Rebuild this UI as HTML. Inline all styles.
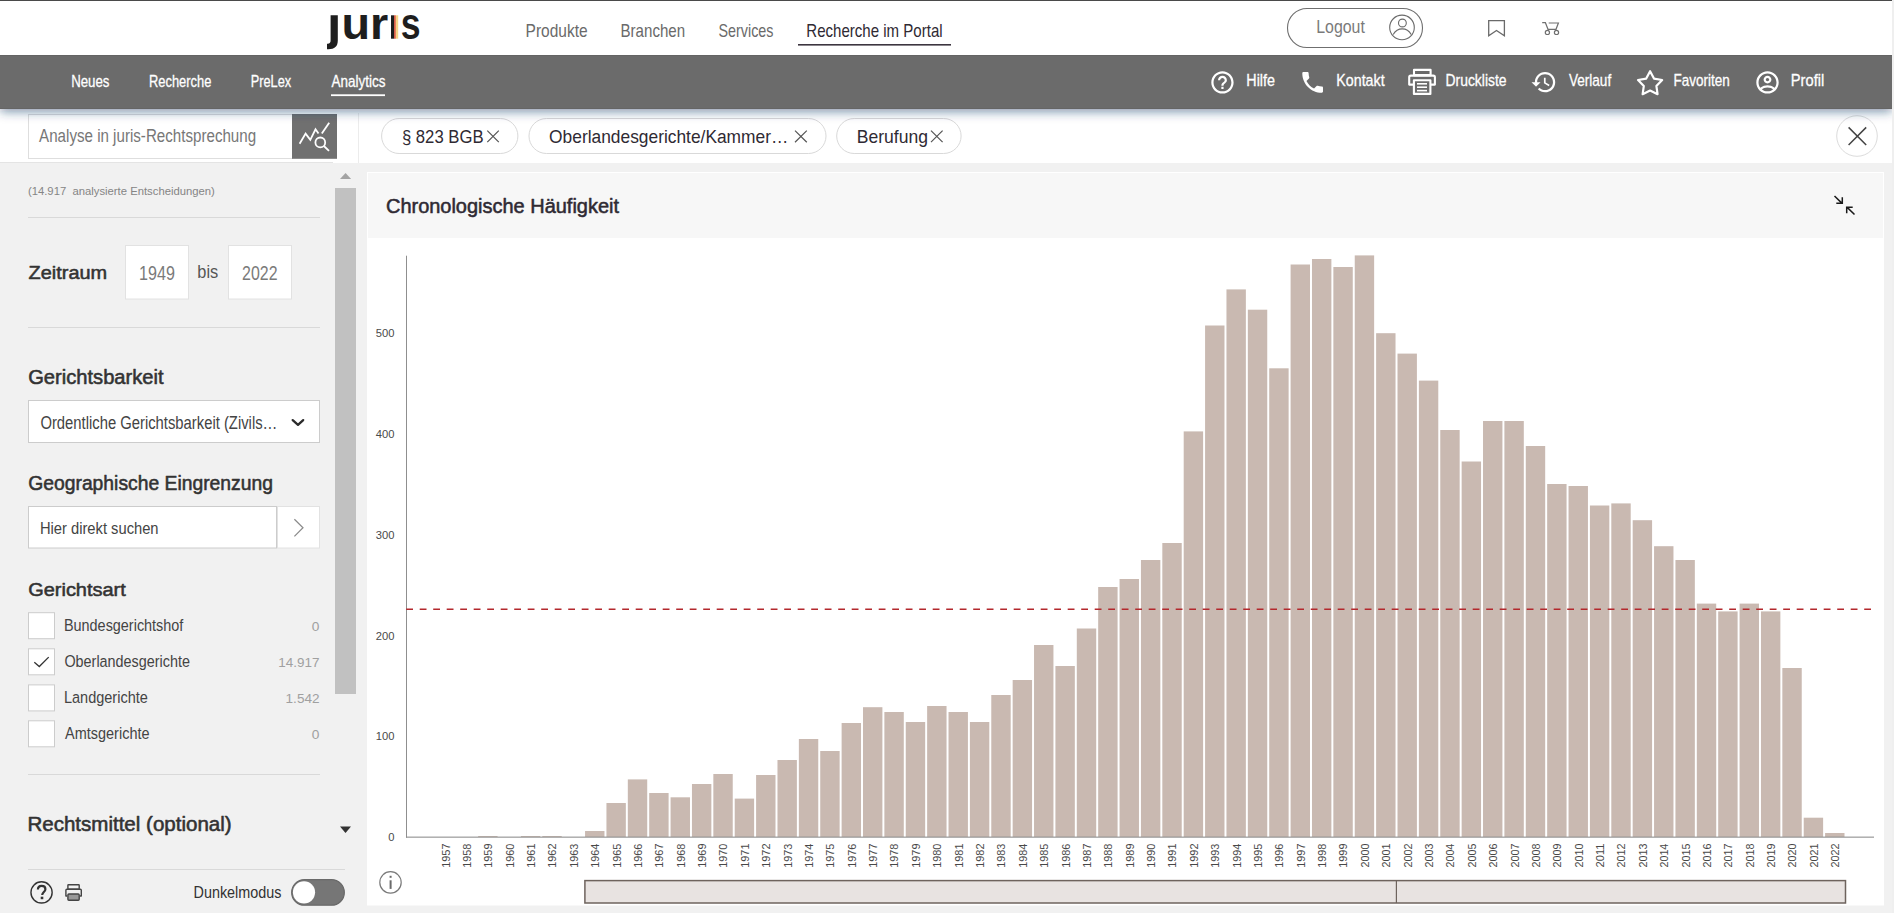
<!DOCTYPE html>
<html><head><meta charset="utf-8"><title>juris Analytics</title>
<style>
html,body{margin:0;padding:0;}
body{width:1894px;height:913px;overflow:hidden;background:#f1f1f1;font-family:"Liberation Sans", sans-serif;}
svg{position:absolute;left:0;top:0;display:block;}
text{font-family:"Liberation Sans", sans-serif;white-space:pre;}
</style></head><body>
<svg width="1894" height="913" viewBox="0 0 1894 913">
<defs>
<linearGradient id="sh" x1="0" y1="0" x2="0" y2="1">
<stop offset="0" stop-color="#a9b5c2"/><stop offset="0.25" stop-color="#c3cbd5"/><stop offset="0.55" stop-color="#e6e9ee"/><stop offset="1" stop-color="#ffffff"/>
</linearGradient>
<filter id="blur" x="-0.05" y="-0.5" width="1.1" height="2"><feGaussianBlur stdDeviation="5.5"/></filter>
<clipPath id="below"><rect x="0" y="108" width="1892" height="40"/></clipPath>
</defs>
<rect x="0" y="0" width="1894" height="913" fill="#f1f1f1"/>
<rect x="0" y="0" width="1892" height="163" fill="#ffffff"/>
<rect x="0" y="0" width="1892" height="1" fill="#4a4a4a"/>
<rect x="1892" y="0" width="2" height="913" fill="#efefef"/>
<rect x="358" y="113" width="1" height="50" fill="#ececec"/>
<rect x="0" y="162" width="333" height="1" fill="#e4e4e4"/>
<g fill="#1e1e1e">
<path d="M330.6,15.3 H337.8 V40.5 C337.8,46.5 334.5,49.2 328.5,49.2 H327 V43.8 C330,43.8 330.6,42.5 330.6,40 Z"/>
</g>
<text x="341.49" y="38.70" font-size="44.50" textLength="46.81" lengthAdjust="spacingAndGlyphs" fill="#1e1e1e" font-weight="bold">ur</text>
<rect x="391" y="15.3" width="3.2" height="23.4" fill="#1e1e1e"/>
<rect x="394.2" y="15.3" width="1.6" height="23.4" fill="#d9442b"/>
<rect x="395.8" y="15.3" width="2.4" height="23.4" fill="#f5d487"/>
<text x="400.75" y="38.70" font-size="44.50" textLength="19.81" lengthAdjust="spacingAndGlyphs" fill="#1e1e1e" font-weight="bold">s</text>
<text x="525.56" y="36.90" font-size="18.37" textLength="62.00" lengthAdjust="spacingAndGlyphs" fill="#6a6a6a">Produkte</text>
<text x="620.49" y="36.90" font-size="18.37" textLength="64.63" lengthAdjust="spacingAndGlyphs" fill="#6a6a6a">Branchen</text>
<text x="718.56" y="36.80" font-size="18.37" textLength="54.94" lengthAdjust="spacingAndGlyphs" fill="#6a6a6a">Services</text>
<text x="806.30" y="36.80" font-size="18.37" textLength="136.35" lengthAdjust="spacingAndGlyphs" fill="#2f2a33">Recherche im Portal</text>
<rect x="798" y="44" width="153" height="1.6" fill="#3c3540"/>
<rect x="1287.5" y="8.5" width="135" height="39" fill="none" stroke="#6f6f6f" stroke-width="1.1" rx="19.5"/>
<text x="1316.23" y="33.30" font-size="17.67" textLength="48.61" lengthAdjust="spacingAndGlyphs" fill="#7a7a7a">Logout</text>
<g fill="none" stroke="#6a6a6a" stroke-width="1.1">
<circle cx="1402" cy="27.45" r="12.3"/>
<circle cx="1402.4" cy="23" r="3.9"/>
<path d="M1393.2,34.6 C1395.5,30.6 1398.8,28.9 1402.2,28.9 C1405.6,28.9 1409,30.6 1411.2,34.6"/>
</g>
<path d="M1488.7,20.7 H1504.4 V35.8 L1496.5,30.5 L1488.7,35.8 Z" fill="none" stroke="#6a6a6a" stroke-width="1.3"/>
<g fill="none" stroke="#707070" stroke-width="1.2">
<path d="M1542.2,22.7 H1545.4 L1548,29.3 H1556 L1558.4,23.0 H1548.7"/>
<circle cx="1547.4" cy="32.4" r="2.1"/><circle cx="1556.5" cy="32.4" r="2.1"/>
</g>
<rect x="28.5" y="114.5" width="264" height="44" fill="#ffffff" stroke="#dedede" stroke-width="1"/>
<rect x="292" y="114" width="45" height="44.8" fill="#707070"/>
<g fill="none" stroke="#ffffff" stroke-width="1.8" stroke-linecap="butt" stroke-linejoin="miter">
<polyline points="299.6,143.8 305.6,133.6 310.3,139.9 315.5,129.3 318.5,133.6"/>
<line x1="321.8" y1="133.6" x2="329.2" y2="122.7"/>
<circle cx="320.3" cy="142.4" r="4.9"/>
<line x1="323.9" y1="146" x2="329" y2="150.8"/>
</g>
<text x="39.10" y="142.10" font-size="18.09" textLength="217.02" lengthAdjust="spacingAndGlyphs" fill="#777777">Analyse in juris-Rechtsprechung</text>
<rect x="381.6" y="118.5" width="136.29999999999995" height="35" fill="#ffffff" stroke="#d9d9d9" stroke-width="1" rx="17.5"/>
<rect x="529.0" y="118.5" width="297.0" height="35" fill="#ffffff" stroke="#d9d9d9" stroke-width="1" rx="17.5"/>
<rect x="836.7" y="118.5" width="124.39999999999998" height="35" fill="#ffffff" stroke="#d9d9d9" stroke-width="1" rx="17.5"/>
<text x="401.88" y="143.00" font-size="19.06" textLength="81.79" lengthAdjust="spacingAndGlyphs" fill="#2f2a33">§ 823 BGB</text>
<text x="549.12" y="143.00" font-size="19.06" textLength="239.21" lengthAdjust="spacingAndGlyphs" fill="#2f2a33">Oberlandesgerichte/Kammer…</text>
<text x="856.70" y="143.00" font-size="19.06" textLength="71.24" lengthAdjust="spacingAndGlyphs" fill="#2f2a33">Berufung</text>
<path d="M487.3,130.6 L498.8,142.2 M498.8,130.6 L487.3,142.2" stroke="#555" stroke-width="1.2" fill="none"/>
<path d="M795.0,130.6 L806.8,142.2 M806.8,130.6 L795.0,142.2" stroke="#555" stroke-width="1.2" fill="none"/>
<path d="M931.0,130.6 L942.6,142.2 M942.6,130.6 L931.0,142.2" stroke="#555" stroke-width="1.2" fill="none"/>
<circle cx="1857" cy="136" r="20.3" fill="#ffffff" stroke="#dcdcdc" stroke-width="1"/>
<path d="M1848.6,127.4 L1866.2,145.0 M1866.2,127.4 L1848.6,145.0" stroke="#444" stroke-width="1.5" fill="none"/>
<text x="27.92" y="195.00" font-size="11.69" textLength="186.98" lengthAdjust="spacingAndGlyphs" fill="#858585">(14.917  analysierte Entscheidungen)</text>
<rect x="28" y="217" width="292" height="1" fill="#d9d9d9"/>
<text x="28.58" y="279.00" font-size="19.20" textLength="78.55" lengthAdjust="spacingAndGlyphs" fill="#333333" stroke="#333333" stroke-width="0.55" stroke-linejoin="round">Zeitraum</text>
<rect x="125.5" y="245.5" width="63" height="53.5" fill="#ffffff" stroke="#e2e2e2" stroke-width="1"/>
<text x="139.09" y="280.00" font-size="19.48" textLength="35.83" lengthAdjust="spacingAndGlyphs" fill="#7a7a7a">1949</text>
<text x="197.34" y="278.30" font-size="18.30" textLength="20.91" lengthAdjust="spacingAndGlyphs" fill="#555555">bis</text>
<rect x="228.5" y="245.5" width="63" height="53.5" fill="#ffffff" stroke="#e2e2e2" stroke-width="1"/>
<text x="242.10" y="280.00" font-size="19.48" textLength="35.39" lengthAdjust="spacingAndGlyphs" fill="#7a7a7a">2022</text>
<rect x="28" y="327" width="292" height="1" fill="#d9d9d9"/>
<text x="28.17" y="384.40" font-size="19.62" textLength="135.45" lengthAdjust="spacingAndGlyphs" fill="#333333" stroke="#333333" stroke-width="0.55" stroke-linejoin="round">Gerichtsbarkeit</text>
<rect x="28.5" y="400.5" width="291" height="42" fill="#ffffff" stroke="#cccccc" stroke-width="1"/>
<text x="40.43" y="428.80" font-size="18.23" textLength="236.96" lengthAdjust="spacingAndGlyphs" fill="#444444">Ordentliche Gerichtsbarkeit (Zivils…</text>
<polyline points="292.7,420.1 298,424.9 303.2,420.1" fill="none" stroke="#2b2b2b" stroke-width="2.3" stroke-linecap="round" stroke-linejoin="round"/>
<text x="28.21" y="490.20" font-size="20.03" textLength="244.79" lengthAdjust="spacingAndGlyphs" fill="#333333" stroke="#333333" stroke-width="0.55" stroke-linejoin="round">Geographische Eingrenzung</text>
<rect x="28.5" y="506.5" width="248" height="41.5" fill="#ffffff" stroke="#cccccc" stroke-width="1"/>
<rect x="277.5" y="506.5" width="42" height="41.5" fill="#ffffff" stroke="#e2e2e2" stroke-width="1"/>
<polyline points="294.4,519.3 303,527.7 294.4,536.4" fill="none" stroke="#8a8a8a" stroke-width="1.2"/>
<text x="39.92" y="534.30" font-size="16.56" textLength="118.65" lengthAdjust="spacingAndGlyphs" fill="#444444">Hier direkt suchen</text>
<text x="28.18" y="596.40" font-size="19.20" textLength="97.65" lengthAdjust="spacingAndGlyphs" fill="#333333" stroke="#333333" stroke-width="0.55" stroke-linejoin="round">Gerichtsart</text>
<rect x="28.5" y="612.7" width="26" height="26" fill="#ffffff" stroke="#cccccc" stroke-width="1"/>
<text x="63.95" y="630.90" font-size="16.97" textLength="119.43" lengthAdjust="spacingAndGlyphs" fill="#444444">Bundesgerichtshof</text>
<text x="311.65" y="630.90" font-size="13.22" textLength="7.65" lengthAdjust="spacingAndGlyphs" fill="#a0a0a0">0</text>
<rect x="28.5" y="648.8" width="26" height="26" fill="#ffffff" stroke="#cccccc" stroke-width="1"/>
<text x="64.45" y="667.00" font-size="16.97" textLength="125.46" lengthAdjust="spacingAndGlyphs" fill="#444444">Oberlandesgerichte</text>
<text x="278.29" y="667.00" font-size="13.22" textLength="41.16" lengthAdjust="spacingAndGlyphs" fill="#a0a0a0">14.917</text>
<rect x="28.5" y="684.9" width="26" height="26" fill="#ffffff" stroke="#cccccc" stroke-width="1"/>
<text x="63.94" y="703.20" font-size="16.97" textLength="83.88" lengthAdjust="spacingAndGlyphs" fill="#444444">Landgerichte</text>
<text x="285.58" y="703.20" font-size="13.22" textLength="33.93" lengthAdjust="spacingAndGlyphs" fill="#a0a0a0">1.542</text>
<rect x="28.5" y="720.8" width="26" height="26" fill="#ffffff" stroke="#cccccc" stroke-width="1"/>
<text x="65.10" y="739.30" font-size="16.97" textLength="84.39" lengthAdjust="spacingAndGlyphs" fill="#444444">Amtsgerichte</text>
<text x="311.65" y="739.30" font-size="13.22" textLength="7.65" lengthAdjust="spacingAndGlyphs" fill="#a0a0a0">0</text>
<polyline points="34.3,662.3 39.3,666.5 48.7,657.1" fill="none" stroke="#333" stroke-width="1.3"/>
<rect x="28" y="774" width="292" height="1" fill="#d9d9d9"/>
<text x="27.43" y="830.90" font-size="19.48" textLength="204.20" lengthAdjust="spacingAndGlyphs" fill="#333333" stroke="#333333" stroke-width="0.55" stroke-linejoin="round">Rechtsmittel (optional)</text>
<polygon points="340,826.6 351,826.6 345.5,833" fill="#333333"/>
<rect x="28" y="869" width="317" height="1" fill="#d9d9d9"/>
<circle cx="41.55" cy="892.4" r="10.6" fill="none" stroke="#333" stroke-width="1.4"/>
<path d="M37.9,889.6 C37.9,887.3 39.6,885.9 41.7,885.9 C43.9,885.9 45.4,887.3 45.4,889.2 C45.4,891.8 42.2,892.3 42.2,895" fill="none" stroke="#333" stroke-width="2.2"/>
<rect x="40.7" y="896.7" width="2.6" height="2.5" fill="#333"/>
<g fill="none" stroke="#444" stroke-width="1.4" stroke-linejoin="round">
<rect x="67.9" y="884.7" width="11.3" height="4.6" rx="0.6"/>
<path d="M67,896 H65.9 V890.3 Q65.9,889.3 66.9,889.3 H80.3 Q81.3,889.3 81.3,890.3 V896 H80"/>
<rect x="67.9" y="894" width="11.3" height="6.2" rx="1" fill="#999"/>
</g>
<text x="193.55" y="897.90" font-size="16.14" textLength="87.84" lengthAdjust="spacingAndGlyphs" fill="#333333">Dunkelmodus</text>
<rect x="291.7" y="879.6" width="52.6" height="25.6" fill="#767676" stroke="#6a6a6a" stroke-width="1.3" rx="12.8"/>
<circle cx="304" cy="892.35" r="11.1" fill="#ffffff"/>
<polygon points="340,178.9 351.1,178.9 345.55,172.9" fill="#a3a3a3"/>
<rect x="335" y="188" width="21" height="506" fill="#c1c1c1"/>
<rect x="367" y="172" width="1517" height="733.5" fill="#ffffff"/>
<rect x="368" y="173" width="1515" height="65" fill="#f7f7f7"/>
<text x="385.98" y="212.60" font-size="20.73" textLength="233.02" lengthAdjust="spacingAndGlyphs" fill="#2f2a33" stroke="#2f2a33" stroke-width="0.55" stroke-linejoin="round">Chronologische Häufigkeit</text>
<g fill="none" stroke="#1a1a1a" stroke-width="1.5">
<path d="M1834.5,196 L1841.8,203.1 M1836.3,203.3 H1842.3 V197.2"/>
<path d="M1854.5,214.5 L1847.2,207.4 M1852.7,207.3 H1846.7 V213.3"/>
</g>
<g fill="#c9b9b1">
<rect x="478.16" y="836.00" width="19.4" height="1.00"/>
<rect x="520.92" y="836.00" width="19.4" height="1.00"/>
<rect x="542.30" y="836.00" width="19.4" height="1.00"/>
<rect x="585.06" y="831.00" width="19.4" height="6.00"/>
<rect x="606.44" y="803.00" width="19.4" height="34.00"/>
<rect x="627.82" y="779.40" width="19.4" height="57.60"/>
<rect x="649.20" y="793.00" width="19.4" height="44.00"/>
<rect x="670.58" y="797.30" width="19.4" height="39.70"/>
<rect x="691.96" y="784.00" width="19.4" height="53.00"/>
<rect x="713.34" y="774.00" width="19.4" height="63.00"/>
<rect x="734.72" y="798.60" width="19.4" height="38.40"/>
<rect x="756.10" y="775.00" width="19.4" height="62.00"/>
<rect x="777.48" y="760.00" width="19.4" height="77.00"/>
<rect x="798.86" y="739.00" width="19.4" height="98.00"/>
<rect x="820.24" y="751.00" width="19.4" height="86.00"/>
<rect x="841.62" y="723.00" width="19.4" height="114.00"/>
<rect x="863.00" y="707.20" width="19.4" height="129.80"/>
<rect x="884.38" y="712.00" width="19.4" height="125.00"/>
<rect x="905.76" y="722.00" width="19.4" height="115.00"/>
<rect x="927.14" y="706.00" width="19.4" height="131.00"/>
<rect x="948.52" y="712.00" width="19.4" height="125.00"/>
<rect x="969.90" y="722.00" width="19.4" height="115.00"/>
<rect x="991.28" y="695.00" width="19.4" height="142.00"/>
<rect x="1012.66" y="680.00" width="19.4" height="157.00"/>
<rect x="1034.04" y="645.00" width="19.4" height="192.00"/>
<rect x="1055.42" y="666.00" width="19.4" height="171.00"/>
<rect x="1076.80" y="628.50" width="19.4" height="208.50"/>
<rect x="1098.18" y="587.00" width="19.4" height="250.00"/>
<rect x="1119.56" y="579.00" width="19.4" height="258.00"/>
<rect x="1140.94" y="560.00" width="19.4" height="277.00"/>
<rect x="1162.32" y="543.00" width="19.4" height="294.00"/>
<rect x="1183.70" y="431.40" width="19.4" height="405.60"/>
<rect x="1205.08" y="325.50" width="19.4" height="511.50"/>
<rect x="1226.46" y="289.40" width="19.4" height="547.60"/>
<rect x="1247.84" y="309.70" width="19.4" height="527.30"/>
<rect x="1269.22" y="368.30" width="19.4" height="468.70"/>
<rect x="1290.60" y="264.50" width="19.4" height="572.50"/>
<rect x="1311.98" y="259.00" width="19.4" height="578.00"/>
<rect x="1333.36" y="267.00" width="19.4" height="570.00"/>
<rect x="1354.74" y="255.40" width="19.4" height="581.60"/>
<rect x="1376.12" y="333.20" width="19.4" height="503.80"/>
<rect x="1397.50" y="353.60" width="19.4" height="483.40"/>
<rect x="1418.88" y="380.60" width="19.4" height="456.40"/>
<rect x="1440.26" y="430.00" width="19.4" height="407.00"/>
<rect x="1461.64" y="461.50" width="19.4" height="375.50"/>
<rect x="1483.02" y="421.00" width="19.4" height="416.00"/>
<rect x="1504.40" y="421.00" width="19.4" height="416.00"/>
<rect x="1525.78" y="446.00" width="19.4" height="391.00"/>
<rect x="1547.16" y="484.00" width="19.4" height="353.00"/>
<rect x="1568.54" y="486.00" width="19.4" height="351.00"/>
<rect x="1589.92" y="505.50" width="19.4" height="331.50"/>
<rect x="1611.30" y="503.40" width="19.4" height="333.60"/>
<rect x="1632.68" y="520.20" width="19.4" height="316.80"/>
<rect x="1654.06" y="546.20" width="19.4" height="290.80"/>
<rect x="1675.44" y="560.00" width="19.4" height="277.00"/>
<rect x="1696.82" y="603.60" width="19.4" height="233.40"/>
<rect x="1718.20" y="611.40" width="19.4" height="225.60"/>
<rect x="1739.58" y="603.60" width="19.4" height="233.40"/>
<rect x="1760.96" y="611.40" width="19.4" height="225.60"/>
<rect x="1782.34" y="668.00" width="19.4" height="169.00"/>
<rect x="1803.72" y="817.70" width="19.4" height="19.30"/>
<rect x="1825.10" y="833.00" width="19.4" height="4.00"/>
</g>
<rect x="406" y="255.7" width="1" height="582" fill="#8f8f8f"/>
<rect x="406" y="836.6" width="1468" height="1.1" fill="#909090"/>
<line x1="406.2" y1="609.3" x2="1872" y2="609.3" stroke="#b3282d" stroke-width="1.4" stroke-dasharray="6.8 6.7"/>
<text x="394.5" y="841.30" font-size="11.2" text-anchor="end" fill="#4a4a4a">0</text>
<text x="394.5" y="740.44" font-size="11.2" text-anchor="end" fill="#4a4a4a">100</text>
<text x="394.5" y="639.58" font-size="11.2" text-anchor="end" fill="#4a4a4a">200</text>
<text x="394.5" y="538.72" font-size="11.2" text-anchor="end" fill="#4a4a4a">300</text>
<text x="394.5" y="437.86" font-size="11.2" text-anchor="end" fill="#4a4a4a">400</text>
<text x="394.5" y="337.00" font-size="11.2" text-anchor="end" fill="#4a4a4a">500</text>
<text transform="translate(449.50,844) rotate(-90)" x="-23.82" y="0" font-size="11.0" textLength="24.37" lengthAdjust="spacingAndGlyphs" fill="#484848">1957</text>
<text transform="translate(470.88,844) rotate(-90)" x="-23.82" y="0" font-size="11.0" textLength="24.25" lengthAdjust="spacingAndGlyphs" fill="#484848">1958</text>
<text transform="translate(492.26,844) rotate(-90)" x="-23.82" y="0" font-size="11.0" textLength="24.31" lengthAdjust="spacingAndGlyphs" fill="#484848">1959</text>
<text transform="translate(513.64,844) rotate(-90)" x="-23.82" y="0" font-size="11.0" textLength="24.19" lengthAdjust="spacingAndGlyphs" fill="#484848">1960</text>
<text transform="translate(535.02,844) rotate(-90)" x="-23.82" y="0" font-size="11.0" textLength="24.31" lengthAdjust="spacingAndGlyphs" fill="#484848">1961</text>
<text transform="translate(556.40,844) rotate(-90)" x="-23.82" y="0" font-size="11.0" textLength="24.37" lengthAdjust="spacingAndGlyphs" fill="#484848">1962</text>
<text transform="translate(577.78,844) rotate(-90)" x="-23.82" y="0" font-size="11.0" textLength="24.25" lengthAdjust="spacingAndGlyphs" fill="#484848">1963</text>
<text transform="translate(599.16,844) rotate(-90)" x="-23.81" y="0" font-size="11.0" textLength="24.08" lengthAdjust="spacingAndGlyphs" fill="#484848">1964</text>
<text transform="translate(620.54,844) rotate(-90)" x="-23.82" y="0" font-size="11.0" textLength="24.25" lengthAdjust="spacingAndGlyphs" fill="#484848">1965</text>
<text transform="translate(641.92,844) rotate(-90)" x="-23.82" y="0" font-size="11.0" textLength="24.25" lengthAdjust="spacingAndGlyphs" fill="#484848">1966</text>
<text transform="translate(663.30,844) rotate(-90)" x="-23.82" y="0" font-size="11.0" textLength="24.37" lengthAdjust="spacingAndGlyphs" fill="#484848">1967</text>
<text transform="translate(684.68,844) rotate(-90)" x="-23.82" y="0" font-size="11.0" textLength="24.25" lengthAdjust="spacingAndGlyphs" fill="#484848">1968</text>
<text transform="translate(706.06,844) rotate(-90)" x="-23.82" y="0" font-size="11.0" textLength="24.31" lengthAdjust="spacingAndGlyphs" fill="#484848">1969</text>
<text transform="translate(727.44,844) rotate(-90)" x="-23.82" y="0" font-size="11.0" textLength="24.19" lengthAdjust="spacingAndGlyphs" fill="#484848">1970</text>
<text transform="translate(748.82,844) rotate(-90)" x="-23.82" y="0" font-size="11.0" textLength="24.31" lengthAdjust="spacingAndGlyphs" fill="#484848">1971</text>
<text transform="translate(770.20,844) rotate(-90)" x="-23.82" y="0" font-size="11.0" textLength="24.37" lengthAdjust="spacingAndGlyphs" fill="#484848">1972</text>
<text transform="translate(791.58,844) rotate(-90)" x="-23.82" y="0" font-size="11.0" textLength="24.25" lengthAdjust="spacingAndGlyphs" fill="#484848">1973</text>
<text transform="translate(812.96,844) rotate(-90)" x="-23.81" y="0" font-size="11.0" textLength="24.08" lengthAdjust="spacingAndGlyphs" fill="#484848">1974</text>
<text transform="translate(834.34,844) rotate(-90)" x="-23.82" y="0" font-size="11.0" textLength="24.25" lengthAdjust="spacingAndGlyphs" fill="#484848">1975</text>
<text transform="translate(855.72,844) rotate(-90)" x="-23.82" y="0" font-size="11.0" textLength="24.25" lengthAdjust="spacingAndGlyphs" fill="#484848">1976</text>
<text transform="translate(877.10,844) rotate(-90)" x="-23.82" y="0" font-size="11.0" textLength="24.37" lengthAdjust="spacingAndGlyphs" fill="#484848">1977</text>
<text transform="translate(898.48,844) rotate(-90)" x="-23.82" y="0" font-size="11.0" textLength="24.25" lengthAdjust="spacingAndGlyphs" fill="#484848">1978</text>
<text transform="translate(919.86,844) rotate(-90)" x="-23.82" y="0" font-size="11.0" textLength="24.31" lengthAdjust="spacingAndGlyphs" fill="#484848">1979</text>
<text transform="translate(941.24,844) rotate(-90)" x="-23.82" y="0" font-size="11.0" textLength="24.19" lengthAdjust="spacingAndGlyphs" fill="#484848">1980</text>
<text transform="translate(962.62,844) rotate(-90)" x="-23.82" y="0" font-size="11.0" textLength="24.31" lengthAdjust="spacingAndGlyphs" fill="#484848">1981</text>
<text transform="translate(984.00,844) rotate(-90)" x="-23.82" y="0" font-size="11.0" textLength="24.37" lengthAdjust="spacingAndGlyphs" fill="#484848">1982</text>
<text transform="translate(1005.38,844) rotate(-90)" x="-23.82" y="0" font-size="11.0" textLength="24.25" lengthAdjust="spacingAndGlyphs" fill="#484848">1983</text>
<text transform="translate(1026.76,844) rotate(-90)" x="-23.81" y="0" font-size="11.0" textLength="24.08" lengthAdjust="spacingAndGlyphs" fill="#484848">1984</text>
<text transform="translate(1048.14,844) rotate(-90)" x="-23.82" y="0" font-size="11.0" textLength="24.25" lengthAdjust="spacingAndGlyphs" fill="#484848">1985</text>
<text transform="translate(1069.52,844) rotate(-90)" x="-23.82" y="0" font-size="11.0" textLength="24.25" lengthAdjust="spacingAndGlyphs" fill="#484848">1986</text>
<text transform="translate(1090.90,844) rotate(-90)" x="-23.82" y="0" font-size="11.0" textLength="24.37" lengthAdjust="spacingAndGlyphs" fill="#484848">1987</text>
<text transform="translate(1112.28,844) rotate(-90)" x="-23.82" y="0" font-size="11.0" textLength="24.25" lengthAdjust="spacingAndGlyphs" fill="#484848">1988</text>
<text transform="translate(1133.66,844) rotate(-90)" x="-23.82" y="0" font-size="11.0" textLength="24.31" lengthAdjust="spacingAndGlyphs" fill="#484848">1989</text>
<text transform="translate(1155.04,844) rotate(-90)" x="-23.82" y="0" font-size="11.0" textLength="24.19" lengthAdjust="spacingAndGlyphs" fill="#484848">1990</text>
<text transform="translate(1176.42,844) rotate(-90)" x="-23.82" y="0" font-size="11.0" textLength="24.31" lengthAdjust="spacingAndGlyphs" fill="#484848">1991</text>
<text transform="translate(1197.80,844) rotate(-90)" x="-23.82" y="0" font-size="11.0" textLength="24.37" lengthAdjust="spacingAndGlyphs" fill="#484848">1992</text>
<text transform="translate(1219.18,844) rotate(-90)" x="-23.82" y="0" font-size="11.0" textLength="24.25" lengthAdjust="spacingAndGlyphs" fill="#484848">1993</text>
<text transform="translate(1240.56,844) rotate(-90)" x="-23.81" y="0" font-size="11.0" textLength="24.08" lengthAdjust="spacingAndGlyphs" fill="#484848">1994</text>
<text transform="translate(1261.94,844) rotate(-90)" x="-23.82" y="0" font-size="11.0" textLength="24.25" lengthAdjust="spacingAndGlyphs" fill="#484848">1995</text>
<text transform="translate(1283.32,844) rotate(-90)" x="-23.82" y="0" font-size="11.0" textLength="24.25" lengthAdjust="spacingAndGlyphs" fill="#484848">1996</text>
<text transform="translate(1304.70,844) rotate(-90)" x="-23.82" y="0" font-size="11.0" textLength="24.37" lengthAdjust="spacingAndGlyphs" fill="#484848">1997</text>
<text transform="translate(1326.08,844) rotate(-90)" x="-23.82" y="0" font-size="11.0" textLength="24.25" lengthAdjust="spacingAndGlyphs" fill="#484848">1998</text>
<text transform="translate(1347.46,844) rotate(-90)" x="-23.82" y="0" font-size="11.0" textLength="24.31" lengthAdjust="spacingAndGlyphs" fill="#484848">1999</text>
<text transform="translate(1368.84,844) rotate(-90)" x="-23.54" y="0" font-size="11.0" textLength="23.91" lengthAdjust="spacingAndGlyphs" fill="#484848">2000</text>
<text transform="translate(1390.22,844) rotate(-90)" x="-23.54" y="0" font-size="11.0" textLength="24.02" lengthAdjust="spacingAndGlyphs" fill="#484848">2001</text>
<text transform="translate(1411.60,844) rotate(-90)" x="-23.54" y="0" font-size="11.0" textLength="24.08" lengthAdjust="spacingAndGlyphs" fill="#484848">2002</text>
<text transform="translate(1432.98,844) rotate(-90)" x="-23.54" y="0" font-size="11.0" textLength="23.97" lengthAdjust="spacingAndGlyphs" fill="#484848">2003</text>
<text transform="translate(1454.36,844) rotate(-90)" x="-23.53" y="0" font-size="11.0" textLength="23.80" lengthAdjust="spacingAndGlyphs" fill="#484848">2004</text>
<text transform="translate(1475.74,844) rotate(-90)" x="-23.54" y="0" font-size="11.0" textLength="23.97" lengthAdjust="spacingAndGlyphs" fill="#484848">2005</text>
<text transform="translate(1497.12,844) rotate(-90)" x="-23.54" y="0" font-size="11.0" textLength="23.97" lengthAdjust="spacingAndGlyphs" fill="#484848">2006</text>
<text transform="translate(1518.50,844) rotate(-90)" x="-23.54" y="0" font-size="11.0" textLength="24.08" lengthAdjust="spacingAndGlyphs" fill="#484848">2007</text>
<text transform="translate(1539.88,844) rotate(-90)" x="-23.54" y="0" font-size="11.0" textLength="23.97" lengthAdjust="spacingAndGlyphs" fill="#484848">2008</text>
<text transform="translate(1561.26,844) rotate(-90)" x="-23.54" y="0" font-size="11.0" textLength="24.02" lengthAdjust="spacingAndGlyphs" fill="#484848">2009</text>
<text transform="translate(1582.64,844) rotate(-90)" x="-23.54" y="0" font-size="11.0" textLength="23.91" lengthAdjust="spacingAndGlyphs" fill="#484848">2010</text>
<text transform="translate(1604.02,844) rotate(-90)" x="-23.56" y="0" font-size="11.0" textLength="24.07" lengthAdjust="spacingAndGlyphs" fill="#484848">2011</text>
<text transform="translate(1625.40,844) rotate(-90)" x="-23.54" y="0" font-size="11.0" textLength="24.08" lengthAdjust="spacingAndGlyphs" fill="#484848">2012</text>
<text transform="translate(1646.78,844) rotate(-90)" x="-23.54" y="0" font-size="11.0" textLength="23.97" lengthAdjust="spacingAndGlyphs" fill="#484848">2013</text>
<text transform="translate(1668.16,844) rotate(-90)" x="-23.53" y="0" font-size="11.0" textLength="23.80" lengthAdjust="spacingAndGlyphs" fill="#484848">2014</text>
<text transform="translate(1689.54,844) rotate(-90)" x="-23.54" y="0" font-size="11.0" textLength="23.97" lengthAdjust="spacingAndGlyphs" fill="#484848">2015</text>
<text transform="translate(1710.92,844) rotate(-90)" x="-23.54" y="0" font-size="11.0" textLength="23.97" lengthAdjust="spacingAndGlyphs" fill="#484848">2016</text>
<text transform="translate(1732.30,844) rotate(-90)" x="-23.54" y="0" font-size="11.0" textLength="24.08" lengthAdjust="spacingAndGlyphs" fill="#484848">2017</text>
<text transform="translate(1753.68,844) rotate(-90)" x="-23.54" y="0" font-size="11.0" textLength="23.97" lengthAdjust="spacingAndGlyphs" fill="#484848">2018</text>
<text transform="translate(1775.06,844) rotate(-90)" x="-23.54" y="0" font-size="11.0" textLength="24.02" lengthAdjust="spacingAndGlyphs" fill="#484848">2019</text>
<text transform="translate(1796.44,844) rotate(-90)" x="-23.54" y="0" font-size="11.0" textLength="23.91" lengthAdjust="spacingAndGlyphs" fill="#484848">2020</text>
<text transform="translate(1817.82,844) rotate(-90)" x="-23.54" y="0" font-size="11.0" textLength="24.02" lengthAdjust="spacingAndGlyphs" fill="#484848">2021</text>
<text transform="translate(1839.20,844) rotate(-90)" x="-23.54" y="0" font-size="11.0" textLength="24.08" lengthAdjust="spacingAndGlyphs" fill="#484848">2022</text>
<circle cx="390.5" cy="882.4" r="10.7" fill="none" stroke="#7a7a7a" stroke-width="1.2"/>
<rect x="389.6" y="875.8" width="2" height="2" fill="#6a6a6a"/>
<rect x="389.6" y="880.3" width="2" height="8.6" fill="#6a6a6a"/>
<rect x="584.9" y="880.6" width="1260.6" height="22.4" fill="#e8e3e1" stroke="#6e635d" stroke-width="1.5"/>
<rect x="1395.8" y="880.6" width="1.2" height="22.4" fill="#6e635d"/>
<g clip-path="url(#below)"><rect x="0" y="58" width="1892" height="53.4" fill="rgb(25,55,95)" fill-opacity="0.55" filter="url(#blur)"/></g>
<rect x="0" y="55" width="1892" height="54" fill="#6b6b6b"/>
<rect x="0" y="108" width="1892" height="1" fill="#656565"/>
<rect x="0" y="55" width="1892" height="1" fill="#646464"/>
<text x="71.14" y="87.00" font-size="16.97" textLength="38.33" lengthAdjust="spacingAndGlyphs" fill="#ffffff" stroke="#ffffff" stroke-width="0.3">Neues</text>
<text x="149.07" y="87.00" font-size="16.97" textLength="62.26" lengthAdjust="spacingAndGlyphs" fill="#ffffff" stroke="#ffffff" stroke-width="0.3">Recherche</text>
<text x="250.68" y="87.00" font-size="16.97" textLength="40.43" lengthAdjust="spacingAndGlyphs" fill="#ffffff" stroke="#ffffff" stroke-width="0.3">PreLex</text>
<text x="331.40" y="87.00" font-size="16.97" textLength="53.99" lengthAdjust="spacingAndGlyphs" fill="#ffffff" stroke="#ffffff" stroke-width="0.3">Analytics</text>
<rect x="331" y="94.3" width="54" height="1.8" fill="#ffffff"/>
<text x="1246.36" y="86.10" font-size="16.70" textLength="28.62" lengthAdjust="spacingAndGlyphs" fill="#ffffff" stroke="#ffffff" stroke-width="0.3">Hilfe</text>
<text x="1336.36" y="86.10" font-size="16.70" textLength="48.23" lengthAdjust="spacingAndGlyphs" fill="#ffffff" stroke="#ffffff" stroke-width="0.3">Kontakt</text>
<text x="1445.49" y="86.10" font-size="16.70" textLength="61.07" lengthAdjust="spacingAndGlyphs" fill="#ffffff" stroke="#ffffff" stroke-width="0.3">Druckliste</text>
<text x="1568.93" y="86.10" font-size="16.70" textLength="42.25" lengthAdjust="spacingAndGlyphs" fill="#ffffff" stroke="#ffffff" stroke-width="0.3">Verlauf</text>
<text x="1673.52" y="86.10" font-size="16.70" textLength="56.34" lengthAdjust="spacingAndGlyphs" fill="#ffffff" stroke="#ffffff" stroke-width="0.3">Favoriten</text>
<text x="1790.82" y="86.10" font-size="16.70" textLength="33.48" lengthAdjust="spacingAndGlyphs" fill="#ffffff" stroke="#ffffff" stroke-width="0.3">Profil</text>
<g fill="#ffffff">
<path transform="translate(1209.07,69.02) scale(1.115)" d="M11 18h2v-2h-2v2zm1-16C6.48 2 2 6.48 2 12s4.48 10 10 10 10-4.48 10-10S17.52 2 12 2zm0 18c-4.41 0-8-3.59-8-8s3.59-8 8-8 8 3.59 8 8-3.59 8-8 8zm0-14c-2.21 0-4 1.79-4 4h2c0-1.1.9-2 2-2s2 .9 2 2c0 2-3 1.75-3 5h2c0-2.25 3-2.5 3-5 0-2.21-1.79-4-4-4z"/>
<path transform="translate(1298.85,68.55) scale(1.15)" d="M6.62 10.79c1.44 2.83 3.76 5.14 6.59 6.59l2.2-2.2c.27-.27.67-.36 1.02-.24 1.12.37 2.33.57 3.57.57.55 0 1 .45 1 1V20c0 .55-.45 1-1 1-9.39 0-17-7.61-17-17 0-.55.45-1 1-1h3.5c.55 0 1 .45 1 1 0 1.25.2 2.45.57 3.57.11.35.03.74-.25 1.02l-2.2 2.2z"/>
<path transform="translate(1530.37,68.6) scale(1.13)" d="M13 3c-4.97 0-9 4.03-9 9H1l3.89 3.89.07.14L9 12H6c0-3.87 3.13-7 7-7s7 3.13 7 7-3.13 7-7 7c-1.93 0-3.68-.79-4.94-2.06l-1.42 1.42C8.27 19.99 10.51 21 13 21c4.97 0 9-4.03 9-9s-4.03-9-9-9zm-1 5v5l4.28 2.54.72-1.21-3.5-2.08V8H12z"/>
<path transform="translate(1754.06,68.96) scale(1.12)" d="M12 2C6.48 2 2 6.48 2 12s4.48 10 10 10 10-4.48 10-10S17.52 2 12 2zM7.07 18.28c.43-.9 3.05-1.78 4.93-1.78s4.51.88 4.93 1.78C15.57 19.36 13.86 20 12 20s-3.57-.64-4.93-1.72zm11.29-1.45c-1.43-1.74-4.9-2.33-6.36-2.33s-4.93.59-6.36 2.33C4.62 15.49 4 13.82 4 12c0-4.41 3.59-8 8-8s8 3.59 8 8c0 1.82-.62 3.49-1.64 4.83zM12 6c-1.94 0-3.5 1.56-3.5 3.5S10.06 13 12 13s3.5-1.56 3.5-3.5S13.94 6 12 6zm0 5c-.83 0-1.5-.67-1.5-1.5S11.17 8 12 8s1.5.67 1.5 1.5S12.83 11 12 11z"/>
</g>
<polygon points="1650.10,71.20 1653.98,78.56 1662.18,79.98 1656.38,85.94 1657.56,94.17 1650.10,90.50 1642.64,94.17 1643.82,85.94 1638.02,79.98 1646.22,78.56" fill="none" stroke="#ffffff" stroke-width="2.2" stroke-linejoin="round"/>
<g fill="none" stroke="#ffffff" stroke-width="2.1" stroke-linejoin="round">
<rect x="1414" y="69.9" width="16.6" height="5.2"/>
<path d="M1413.9,84.6 H1409.2 V77.2 Q1409.2,75.6 1410.8,75.6 H1433.3 Q1434.9,75.6 1434.9,77.2 V84.6 H1430.4"/>
<rect x="1413.9" y="80.3" width="16.5" height="13.6"/>
</g>
<g fill="#ffffff"><rect x="1417" y="83" width="10" height="1.6"/><rect x="1417" y="86.4" width="10" height="1.6"/><rect x="1417" y="89.8" width="10" height="1.6"/></g>
</svg></body></html>
